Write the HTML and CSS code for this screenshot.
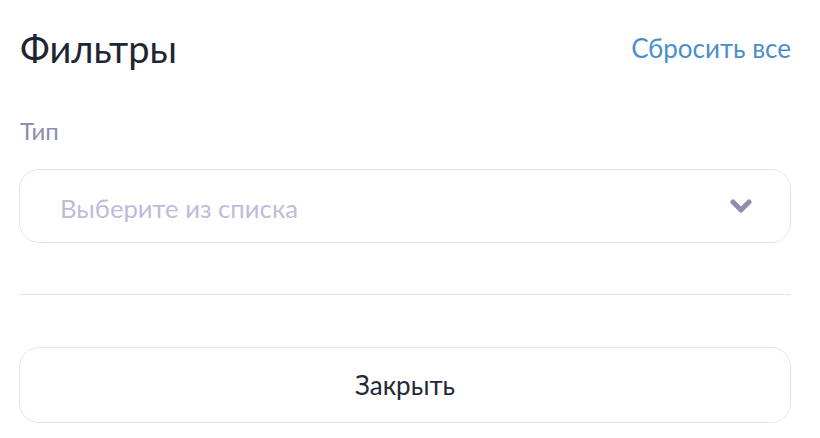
FILE: index.html
```html
<!DOCTYPE html>
<html lang="ru">
<head>
<meta charset="UTF-8">
<meta name="viewport" content="width=device-width, initial-scale=1.0">
<title>Фильтры</title>
<link rel="stylesheet" href="styles.css">
</head>
<body>

<div class="filters">

  <div class="filters-head">
    <h2>Фильтры</h2>
    <a href="#" class="reset">Сбросить все</a>
  </div>

  <div class="field">
    <label class="field-label">Тип</label>
    <div class="select">
      <span class="select-placeholder">Выберите из списка</span>
      <svg class="chevron" width="22" height="16" viewBox="0 0 22 16">
        <polyline points="3,4 11,12 19,4" fill="none" stroke="#8e8dab" stroke-width="5" stroke-linecap="round" stroke-linejoin="round"/>
      </svg>
    </div>
  </div>

  <hr class="divider">

  <button class="close-btn">Закрыть</button>

</div>

</body>
</html>
```

FILE: styles.css
```css
body {
  font-family: Lato, "Open Sans", sans-serif;
  background-color: #fff;
  margin: 0;
  padding: 0;
}
.filters {
  padding: 26px 29px 0 19px;
}
.filters-head {
  display: flex;
  justify-content: space-between;
  align-items: center;
}
h2 {
  margin: 0;
  font-size: 38px;
  line-height: 44px;
  font-weight: 400;
  color: #1f2633;
  padding-left: 1px;
}
.reset {
  font-size: 26px;
  color: #4a8fca;
  text-decoration: none;
}
.field {
  margin-top: 46px;
}
.field-label {
  display: block;
  font-size: 24px;
  line-height: 30px;
  color: #8a8fb0;
  padding-left: 1px;
  margin-bottom: 23px;
}
.select {
  display: flex;
  align-items: center;
  justify-content: space-between;
  height: 72px;
  padding: 0 38px 0 40px;
  border: 1px solid #dde9ef;
  border-radius: 20px;
}
.select-placeholder {
  font-size: 25.7px;
  color: #bdbddb;
  margin-top: 4px;
}
.divider {
  border: 0;
  border-top: 1px solid #dde9ef;
  margin: 51px 0 0 0;
}
.close-btn {
  display: block;
  width: 100%;
  height: 76px;
  margin-top: 52px;
  background-color: #fff;
  border: 1px solid #dde9ef;
  border-radius: 20px;
  font-family: Lato, "Open Sans", sans-serif;
  font-size: 26px;
  color: #222a36;
  cursor: pointer;
}
```
